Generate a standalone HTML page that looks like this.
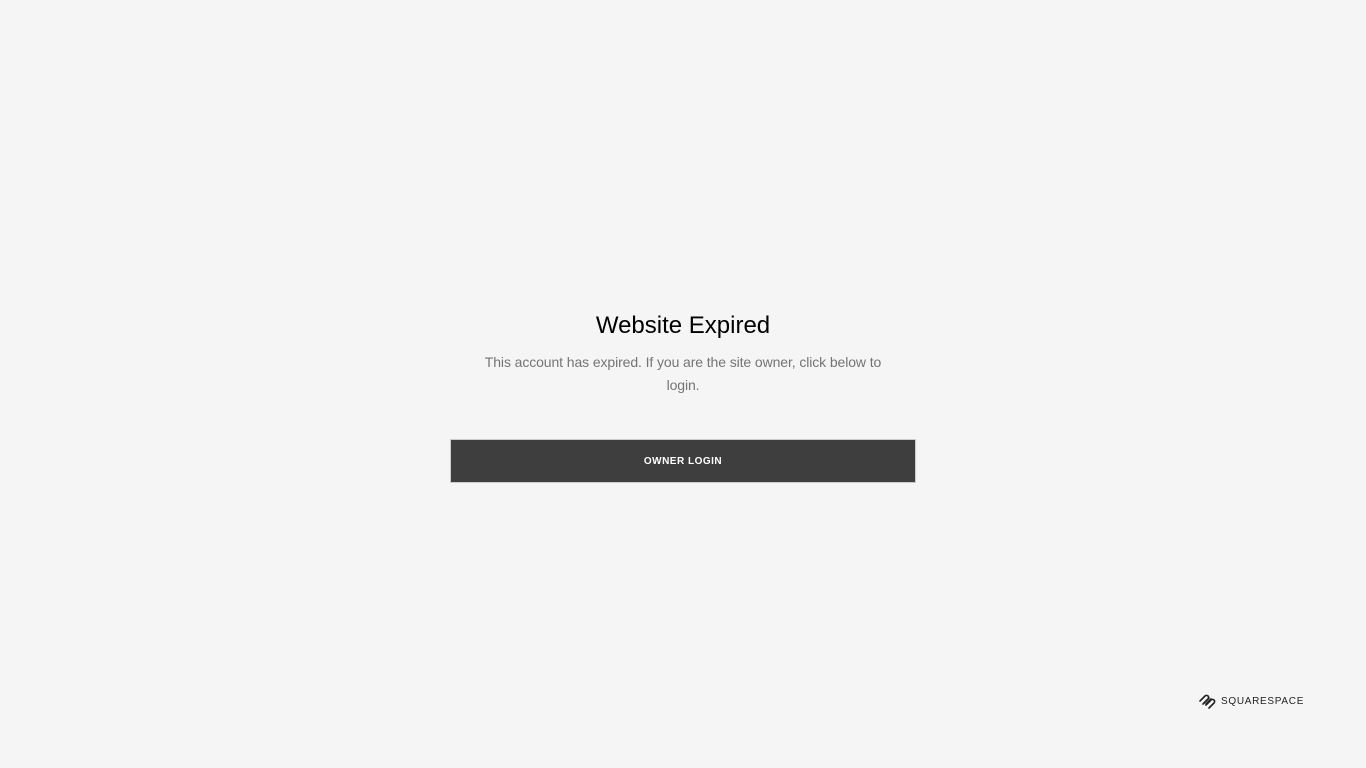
<!DOCTYPE html>
<html><head><meta charset="utf-8"><style>
html,body{margin:0;padding:0;background:#f5f5f5;width:1366px;height:768px;overflow:hidden;font-family:"Liberation Sans",Arial,sans-serif}
h1{position:absolute;left:0;width:1366px;top:310px;margin:0;text-align:center;font-weight:400;font-size:24px;line-height:32px;color:#000}
p{position:absolute;left:468px;width:430px;top:351px;margin:0;text-align:center;font-size:14px;line-height:23px;color:#747474;letter-spacing:-0.1px}
.btn{position:absolute;left:450px;top:439px;width:466px;height:44px;background:#3e3e3e;border:1px solid #ccc;box-sizing:border-box;color:#fff;font-size:10px;font-weight:700;letter-spacing:.5px;text-align:center;line-height:44px}
.logo{position:absolute;left:1198px;top:693px;display:flex;align-items:center;gap:4px;font-size:10px;letter-spacing:.7px;color:#222}
</style></head><body>
<h1>Website Expired</h1>
<p>This account has expired. If you are the site owner, click below to login.</p>
<div class="btn">OWNER LOGIN</div>
<div class="logo"><svg width="19" height="16" viewBox="0 0 19 16" fill="none" stroke="#222" stroke-width="1.6" stroke-linecap="round"><path d="M2 8L7 3a2 2 0 0 1 3 3L5 11"/><path d="M6 10l5-5"/><path d="M8 12l5-5a2 2 0 0 1 3 3l-5 5"/><path d="M13 6l-5 5"/></svg>SQUARESPACE</div>
</body></html>
